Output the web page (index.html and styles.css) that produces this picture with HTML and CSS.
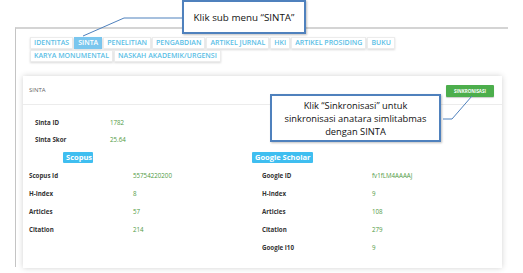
FILE: index.html
```html
<!DOCTYPE html>
<html lang="id">
<head>
  <meta charset="UTF-8">
  <title>Profil SINTA</title>
  <link rel="stylesheet" href="styles.css">
</head>
<body>
  <div id="frame">
    <div class="tabs">
      <span class="tab">Identitas</span>
      <span class="tab active">Sinta</span>
      <span class="tab">Penelitian</span>
      <span class="tab">Pengabdian</span>
      <span class="tab">Artikel Jurnal</span>
      <span class="tab">HKI</span>
      <span class="tab">Artikel Prosiding</span>
      <span class="tab">Buku</span>
      <span class="tab">Karya Monumental</span>
      <span class="tab">Naskah Akademik/Urgensi</span>
    </div>

    <div class="card">
      <div class="card-head">
        <span class="card-title">SINTA</span>
        <button class="btn-sync">SINKRONISASI</button>
      </div>
      <div class="card-body">
        <div class="sinta-rows">
          <div class="row"><span class="lbl">Sinta ID</span><span class="val">1782</span></div>
          <div class="row"><span class="lbl">Sinta Skor</span><span class="val">25.64</span></div>
        </div>

        <div class="badges">
          <span class="badge scopus">Scopus</span>
          <span class="badge gs">Google Scholar</span>
        </div>

        <div class="cols">
          <div class="col left">
            <div class="row"><span class="lbl">Scopus Id</span><span class="val">55754220200</span></div>
            <div class="row"><span class="lbl">H-Index</span><span class="val">8</span></div>
            <div class="row"><span class="lbl">Articles</span><span class="val">57</span></div>
            <div class="row"><span class="lbl">Citation</span><span class="val">214</span></div>
          </div>
          <div class="col right">
            <div class="row"><span class="lbl">Google ID</span><span class="val">fv1fLM4AAAAJ</span></div>
            <div class="row"><span class="lbl">H-Index</span><span class="val">9</span></div>
            <div class="row"><span class="lbl">Articles</span><span class="val">108</span></div>
            <div class="row"><span class="lbl">Citation</span><span class="val">279</span></div>
            <div class="row"><span class="lbl">Google I10</span><span class="val">9</span></div>
          </div>
        </div>
      </div>
    </div>
  </div>

  <!-- penanda / callout -->
  <svg id="lines" width="523" height="273">
    <polyline points="83,36 124,18 182,18" />
    <polyline points="443,119 452,119 472,96" />
  </svg>
  <div class="callout c1">Klik sub menu “SINTA”</div>
  <div class="callout c2">Klik “Sinkronisasi” untuk<br>sinkronisasi anatara simlitabmas<br>dengan SINTA</div>
</body>
</html>
```

FILE: styles.css
```css
body {
  margin: 0;
  background: #fff;
  font-family: "Open Sans", "DejaVu Sans", sans-serif;
  color: #333;
  position: relative;
  width: 523px;
  height: 273px;
  overflow: hidden;
}

#frame {
  margin: 27px 0 0 15px;
  width: 493px;
  height: 240px;
  border-top: 2px solid #d4d4d4;
  border-left: 1px solid #c4c4c4;
  padding: 8px 0 0 7px;
  box-sizing: border-box;
}

.tabs {
  display: flex;
  flex-wrap: wrap;
  gap: 1px 1px;
  margin-left: 7px;
  width: 380px;
}
.tab {
  display: block;
  height: 10px;
  line-height: 10px;
  padding: 0 3px;
  font-size: 7px;
  font-weight: 600;
  text-transform: uppercase;
  color: #5cc0e6;
  background: #fff;
  border: 1px solid #ececec;
  box-shadow: 0 1px 2px rgba(0, 0, 0, 0.15);
}
.tab.active {
  background: #7ac6ee;
  color: #fff;
  border-color: #7ac6ee;
}

.card {
  margin-top: 14px;
  width: 479px;
  height: 192px;
  background: #fff;
  box-shadow: 0 0 6px rgba(0, 0, 0, 0.18);
}
.card-head {
  height: 28px;
  border-bottom: 1px solid #ececec;
  display: flex;
  align-items: center;
  justify-content: space-between;
  padding: 0 8px 0 6px;
}
.card-title {
  font-size: 6px;
  color: #666;
}
.btn-sync {
  width: 48px;
  height: 12px;
  padding: 0;
  border: none;
  background: #4cae4c;
  color: #fff;
  font-family: inherit;
  font-size: 4.5px;
  font-weight: 700;
  border-radius: 1px;
  box-shadow: 0 1px 1px rgba(0, 0, 0, 0.2);
  margin-top: 2px;
}

.card-body {
  padding: 9px 6px 0 6px;
}
.row {
  display: flex;
  align-items: center;
  height: 18px;
  font-size: 6.2px;
}
.lbl {
  font-weight: 700;
  color: #333;
}
.val {
  color: #4f9a3f;
}

.sinta-rows {
  padding-left: 6px;
}
.sinta-rows .row {
  height: 17px;
}
.sinta-rows .lbl {
  width: 75px;
}

.badges {
  display: flex;
  margin-top: 4px;
  height: 11px;
}
.badge {
  display: block;
  height: 11px;
  line-height: 11px;
  padding: 0 3px;
  font-size: 7.5px;
  font-weight: 700;
  color: #fff;
  background: #3fbef0;
  border-radius: 1px;
}
.badge.scopus {
  margin-left: 34px;
  width: 24px;
  text-align: center;
}
.badge.gs {
  margin-left: 159px;
}

.cols {
  display: flex;
  margin-top: 3px;
}
.col {
  width: 233px;
}
.col.left .lbl {
  width: 104px;
}
.col.right .lbl {
  width: 110px;
}

#lines {
  position: absolute;
  left: 0;
  top: 0;
  pointer-events: none;
}
#lines polyline {
  fill: none;
  stroke: #4f81bd;
  stroke-width: 1;
}

.callout {
  position: absolute;
  box-sizing: border-box;
  background: #fff;
  border: 2px solid #4f81bd;
  box-shadow: 1px 1px 2px rgba(0, 0, 0, 0.25);
  color: #111;
  text-align: center;
  display: flex;
  align-items: center;
  justify-content: center;
}
.c1 {
  left: 182px;
  top: 0;
  width: 124px;
  height: 34px;
  font-size: 9.8px;
}
.c2 {
  left: 270px;
  top: 94px;
  width: 171px;
  height: 48px;
  font-size: 9.3px;
  line-height: 13px;
  padding-top: 1px;
}
```
